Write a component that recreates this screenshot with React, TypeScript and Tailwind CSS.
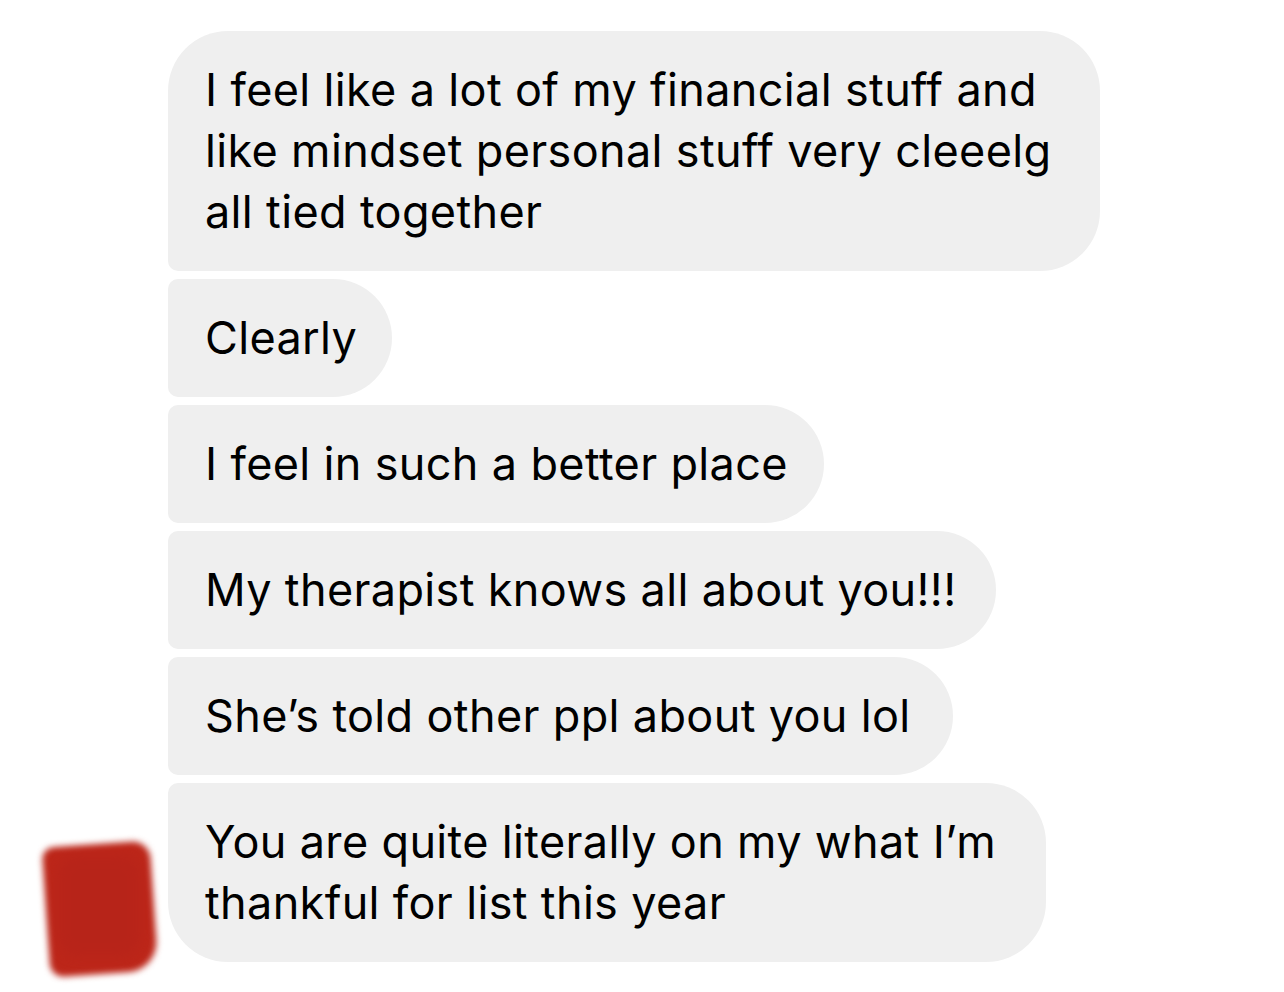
const messages = [
  { lines: ["I feel like a lot of my financial stuff and", "like mindset personal stuff very cleeelg", "all tied together"], w: "w-[932px]", shape: "rounded-tl-[60px] rounded-bl-[10px]" },
  { lines: ["Clearly"], w: "w-[224px]", shape: "rounded-tl-[10px] rounded-bl-[10px]" },
  { lines: ["I feel in such a better place"], w: "w-[656px]", shape: "rounded-tl-[10px] rounded-bl-[10px]" },
  { lines: ["My therapist knows all about you!!!"], w: "w-[828px]", shape: "rounded-tl-[10px] rounded-bl-[10px]" },
  { lines: ["She’s told other ppl about you lol"], w: "w-[785px]", shape: "rounded-tl-[10px] rounded-bl-[10px]" },
  { lines: ["You are quite literally on my what I’m", "thankful for list this year"], w: "w-[878px]", shape: "rounded-tl-[10px] rounded-bl-[60px]" },
];

const App = () => {
  return (
    <div className="min-h-[992px] w-[1284px] bg-white pt-[31px] font-['Inter','Liberation_Sans',sans-serif] text-black">
      <div className="flex items-end">
        <div className="w-[168px] shrink-0">
          <div className="relative mb-[-16px] ml-[44px] h-[138px] w-[114px]">
            <div className="absolute left-[2px] top-[4px] h-[130px] w-[108px] rotate-[-4deg] rounded-tl-[12px] rounded-tr-[18px] rounded-br-[30px] rounded-bl-[14px] bg-[#bc2619] blur-[3px]" />
            <div className="absolute left-[14px] top-[16px] h-[100px] w-[82px] rounded-[20px] bg-[#b5231a] opacity-60 blur-[6px]" />
          </div>
        </div>
        <div className="flex flex-col gap-[8px]">
          {messages.map((m, i) => (
            <div
              key={i}
              className={`${m.w} ${m.shape} rounded-r-[60px] bg-[#efefef] pt-[28px] pb-[29px] pl-[37px] text-[45px] leading-[61px] tracking-[0.35px] whitespace-nowrap`}
            >
              {m.lines.map((l, j) => (
                <div key={j}>{l}</div>
              ))}
            </div>
          ))}
        </div>
      </div>
    </div>
  );
};

export default App;
